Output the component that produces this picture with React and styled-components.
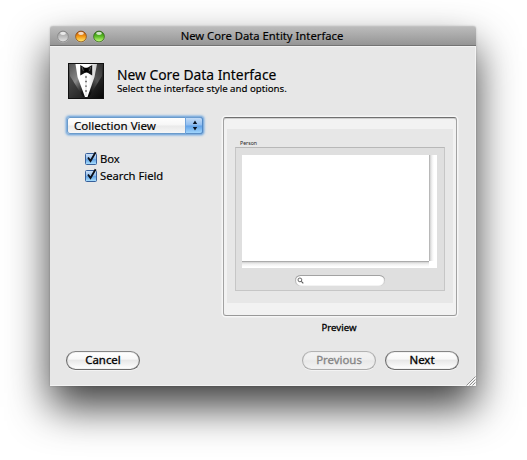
import React from "react";
import styled, { createGlobalStyle, css } from "styled-components";

const Global = createGlobalStyle`
  * { box-sizing: border-box; }
  body { margin: 0; background: #fff; overflow: hidden; }
`;

const Desktop = styled.main`
  width: 527px;
  height: 460px;
  padding: 26px 0 0 50px;
  font-family: "Noto Sans", "Open Sans", sans-serif;
  color: #000;
  -webkit-text-stroke: 0.15px currentColor;
`;

const Window = styled.section`
  position: relative;
  display: flex;
  flex-direction: column;
  width: 426px;
  height: 360px;
  border-radius: 3px 3px 0 0;
  background: #e7e7e7;
  box-shadow: 0 21px 42px rgba(0, 0, 0, 0.76), 0 0 2px rgba(0, 0, 0, 0.22);
`;

const TitleBar = styled.header`
  display: flex;
  align-items: center;
  height: 20px;
  padding: 0 7px;
  border-top: 1px solid #c2c2c2;
  border-bottom: 1px solid #737373;
  border-radius: 3px 3px 0 0;
  background: linear-gradient(#bbb, #959595);
`;

const Lights = styled.div`
  display: flex;
  gap: 6px;
  width: 60px;
`;

const Title = styled.h1`
  flex: 1;
  margin: 0;
  padding-right: 62px;
  text-align: center;
  font-size: 11.28px;
  font-weight: 400;
  line-height: 18px;
  white-space: nowrap;
`;

const Body = styled.div`
  flex: 1;
  display: flex;
  flex-direction: column;
  padding: 16px 16px 15px 16px;
  border: solid #f3f3f3;
  border-width: 1px 1px 1px 0;
`;

const Heading = styled.div`
  display: flex;
  gap: 13px;
  height: 53px;
  padding-left: 2px;
`;

const HeadingText = styled.div`
  padding-top: 3px;
  white-space: nowrap;
`;

const HeadingTitle = styled.h2`
  margin: 0;
  font-size: 13.84px;
  font-weight: 400;
  line-height: 17px;
`;

const HeadingHint = styled.p`
  margin: 0;
  font-size: 9.68px;
  line-height: 12px;
`;

const Columns = styled.div`
  display: flex;
  justify-content: space-between;
  height: 235px;
  padding: 1px 2px 0 1px;
`;

const Options = styled.div`
  width: 136px;
`;

const Popup = styled.button`
  display: flex;
  width: 136px;
  height: 17px;
  padding: 0 0 0 7px;
  border: 0;
  border-radius: 3px;
  font: inherit;
  font-size: 11.57px;
  line-height: 17px;
  color: inherit;
  text-align: left;
  background: linear-gradient(#fff 0%, #f6f6f6 48%, #e9e9e9 52%, #f8f8f8 100%);
  box-shadow: inset 0 0 0 1px #6b9bcb, 0 0 1px 1px #82afdc, 0 0 2px 1.5px #a5c5e5;
`;

const PopupText = styled.span`
  flex: 1;
`;

const PopupArrows = styled.span`
  display: flex;
  align-items: center;
  justify-content: center;
  width: 18px;
  border-left: 1px solid #6fa3dc;
  border-radius: 0 3px 3px 0;
  background: linear-gradient(#c9dff7 0%, #8fbdf0 48%, #62a2e8 52%, #a9dcff 100%);
  box-shadow: inset -1px 0 #5389c5, inset 0 1px #6d9dd0, inset 0 -1px #5c8fc6;
`;

const CheckList = styled.div`
  padding: 16px 0 0 18px;
`;

const CheckRow = styled.label`
  display: flex;
  align-items: flex-start;
  gap: 3px;
  height: 17px;
  font-size: 11.22px;
  line-height: 17px;
`;

const CheckIcon = styled.svg`
  width: 12px;
  height: 14px;
  margin-top: 1px;
`;

const PreviewColumn = styled.div`
  width: 234px;
`;

const PreviewFrame = styled.div`
  height: 199px;
  padding: 11px 3px 0;
  border: 1px solid #a2a2a2;
  border-top-color: #707070;
  border-bottom-color: #999;
  border-radius: 3px;
  background: #f2f2f2;
  box-shadow: 0 0 0 1.5px #f6f6f6, inset 0 1px #cfcfcf;
`;

const PreviewCanvas = styled.div`
  height: 174px;
  padding: 11px 8px 0;
  background: #e7e7e7;
`;

const GroupName = styled.div`
  height: 7px;
  padding-left: 5px;
  font-size: 5.2px;
  line-height: 6px;
  color: #222;
  -webkit-text-stroke: 0;
`;

const GroupBox = styled.div`
  display: flex;
  flex-direction: column;
  align-items: center;
  height: 144px;
  padding: 7px 7px 0 6px;
  border: 1px solid #c6c6c6;
  border-top-color: #b8b8b8;
  background: #dfdfdf;
`;

const Collection = styled.div`
  display: grid;
  grid-template-columns: 187px 8px;
  grid-template-rows: 106px 7px;
  width: 195px;
  background: #fff;
`;

const ScrollTrack = styled.div`
  ${(p) =>
    p.$across
      ? css`
          background: linear-gradient(#ababab 0 1px, #cfcfcf 1px, #f0f0f0 3px, #fff 6px);
        `
      : css`
          background: linear-gradient(90deg, #b8b8b8 0 1px, #d2d2d2 1px, #f1f1f1 3px, #fff 5px);
        `}
`;

const SearchField = styled.div`
  display: flex;
  align-items: center;
  width: 90px;
  height: 11px;
  margin: 7px 0 0;
  padding-left: 2px;
  border-radius: 6px;
  background: #fff;
  box-shadow: inset 0 1px #a2a2a2, inset 1px 0 1px #b5b5b5, inset -1px 0 1px #c9c9c9;
`;

const PreviewLabel = styled.div`
  padding: 6px 2px 0 0;
  text-align: center;
  font-size: 9.6px;
  line-height: 12px;
  -webkit-text-stroke: 0.3px currentColor;
`;

const Footer = styled.footer`
  display: flex;
  gap: 9px;
`;

const PushButton = styled.button`
  width: 74px;
  height: 19px;
  margin-right: ${(p) => (p.$leading ? "auto" : "0")};
  padding: 0 0 1px;
  border: 1px solid ${(p) => (p.disabled ? "#acacac" : "#6c6c6c")};
  border-top-color: ${(p) => (p.disabled ? "#b3b3b3" : "#868686")};
  border-radius: 10px;
  font: inherit;
  font-size: 11.4px;
  line-height: 16px;
  color: ${(p) => (p.disabled ? "#858585" : "#000")};
  -webkit-text-stroke: 0.3px currentColor;
  background: ${(p) =>
    p.disabled
      ? "linear-gradient(#f3f3f3 0%, #efefef 42%, #e8e8e8 52%, #f3f3f3 100%)"
      : "linear-gradient(#fff 0%, #f8f8f8 40%, #e8e8e8 50%, #fff 100%)"};
  box-shadow: inset 0 0 1px ${(p) => (p.disabled ? "#ccc" : "#777")},
    0 1px 0 rgba(255, 255, 255, 0.5);
`;

const Grip = styled.svg`
  position: absolute;
  right: 0;
  bottom: 0;
  width: 10px;
  height: 10px;
`;

const LIGHTS = [
  { id: "close", rim: "#777", dark: "#999", mid: "#bdbdbd", glow: "#e4e4e4" },
  { id: "minimize", rim: "#763c0b", dark: "#b84b00", mid: "#f49a16", glow: "#ffef79" },
  { id: "zoom", rim: "#24520d", dark: "#267c08", mid: "#5ebd27", glow: "#c7ff83" },
];

function Light({ id, rim, dark, mid, glow }) {
  return (
    <svg width="12" height="13" viewBox="0 0 12 13">
      <defs>
        <linearGradient id={id} x1="0" y1="0" x2="0" y2="1">
          <stop offset="0" stopColor={dark} />
          <stop offset="0.5" stopColor={mid} />
          <stop offset="1" stopColor={glow} />
        </linearGradient>
      </defs>
      <circle cx="6" cy="7" r="5.8" fill="#d0d0d0" opacity="0.7" />
      <circle cx="6" cy="6.5" r="5.4" fill={`url(#${id})`} stroke={rim} strokeWidth="0.9" strokeOpacity="0.8" />
      <ellipse cx="6" cy="3.3" rx="2.9" ry="1.6" fill="#fff" opacity="0.75" />
    </svg>
  );
}

function Tuxedo() {
  return (
    <svg width="36" height="36" viewBox="0 0 36 36">
      <defs>
        <linearGradient id="jacket" x1="0" y1="0" x2="1" y2="1">
          <stop offset="0" stopColor="#5c5c5c" />
          <stop offset="0.5" stopColor="#333" />
          <stop offset="1" stopColor="#050505" />
        </linearGradient>
        <linearGradient id="lapelLeft" x1="0" y1="0" x2="0.6" y2="1">
          <stop offset="0" stopColor="#555" />
          <stop offset="0.55" stopColor="#888" />
          <stop offset="1" stopColor="#151515" />
        </linearGradient>
        <linearGradient id="lapelRight" x1="1" y1="0" x2="0.3" y2="1">
          <stop offset="0" stopColor="#333" />
          <stop offset="0.5" stopColor="#555" />
          <stop offset="1" stopColor="#080808" />
        </linearGradient>
        <linearGradient id="shirt" x1="0" y1="0" x2="1" y2="0">
          <stop offset="0" stopColor="#fff" />
          <stop offset="0.6" stopColor="#fff" />
          <stop offset="1" stopColor="#c9c9c9" />
        </linearGradient>
      </defs>
      <rect width="36" height="36" fill="url(#jacket)" />
      <path d="M2 1H10L17 34H15L2 13Z" fill="url(#lapelLeft)" />
      <path d="M34 1H27L19 34H21L34 13Z" fill="url(#lapelRight)" />
      <path d="M7.5 1H29L26.5 14L19.5 34H17L9.5 14Z" fill="url(#shirt)" />
      <path d="M18 12V33" stroke="#ddd" strokeWidth="1" />
      <path d="M12.3 2L18 5.5L24.2 2V12.4L18.4 9L12.3 12.4Z" fill="#111" />
      <rect x="16.4" y="4.8" width="3.7" height="4.7" rx="0.8" fill="#000" />
      <path d="M14 4L15.4 8M22.6 4L21.5 8" stroke="#666" strokeWidth="0.8" />
      <path d="M17.3 14h1.4M17.3 18.5h1.4M17.3 23.2h1.4M17.3 28h1.4" stroke="#444" strokeWidth="1.3" />
      <rect x="0.5" y="0.5" width="35" height="35" fill="none" stroke="#101010" />
    </svg>
  );
}

function CheckBox() {
  return (
    <CheckIcon viewBox="0 0 12 14">
      <defs>
        <linearGradient id="checkFill" x1="0" y1="0" x2="0" y2="1">
          <stop offset="0" stopColor="#d5e5f7" />
          <stop offset="0.48" stopColor="#8dbbed" />
          <stop offset="0.55" stopColor="#65a4e5" />
          <stop offset="1" stopColor="#b0e4ff" />
        </linearGradient>
      </defs>
      <rect x="0.5" y="2.5" width="11" height="11" rx="1" fill="url(#checkFill)" stroke="#375f9a" />
      <path d="M3 6.5L5.5 10L10.6 1.3" fill="none" stroke="#0b0f18" strokeWidth="1.8" />
    </CheckIcon>
  );
}

const OPTIONS = ["Box", "Search Field"];

export default function App() {
  return (
    <Desktop>
      <Global />
      <Window>
        <TitleBar>
          <Lights>
            {LIGHTS.map((light) => (
              <Light key={light.id} {...light} />
            ))}
          </Lights>
          <Title>New Core Data Entity Interface</Title>
        </TitleBar>
        <Body>
          <Heading>
            <Tuxedo />
            <HeadingText>
              <HeadingTitle>New Core Data Interface</HeadingTitle>
              <HeadingHint>Select the interface style and options.</HeadingHint>
            </HeadingText>
          </Heading>
          <Columns>
            <Options>
              <Popup>
                <PopupText>Collection View</PopupText>
                <PopupArrows>
                  <svg width="6" height="11" viewBox="0 0 6 11">
                    <path d="M3 0.5L5.2 4H0.8ZM3 10.5L5.2 7H0.8Z" fill="#0a1524" />
                  </svg>
                </PopupArrows>
              </Popup>
              <CheckList>
                {OPTIONS.map((name) => (
                  <CheckRow key={name}>
                    <CheckBox />
                    {name}
                  </CheckRow>
                ))}
              </CheckList>
            </Options>
            <PreviewColumn>
              <PreviewFrame>
                <PreviewCanvas>
                  <GroupName>Person</GroupName>
                  <GroupBox>
                    <Collection>
                      <div />
                      <ScrollTrack />
                      <ScrollTrack $across />
                    </Collection>
                    <SearchField>
                      <svg width="7" height="7" viewBox="0 0 7 7">
                        <circle cx="2.9" cy="2.9" r="1.9" fill="none" stroke="#555" strokeWidth="0.9" />
                        <path d="M4.3 4.3L6.3 6.3" stroke="#555" strokeWidth="1.1" />
                      </svg>
                    </SearchField>
                  </GroupBox>
                </PreviewCanvas>
              </PreviewFrame>
              <PreviewLabel>Preview</PreviewLabel>
            </PreviewColumn>
          </Columns>
          <Footer>
            <PushButton $leading>Cancel</PushButton>
            <PushButton disabled>Previous</PushButton>
            <PushButton>Next</PushButton>
          </Footer>
        </Body>
        <Grip viewBox="0 0 10 10">
          <path d="M1.5 9.5L9.5 1.5M4.5 9.5L9.5 4.5M7.5 9.5L9.5 7.5" stroke="#fff" strokeWidth="1" />
          <path d="M0.5 9.5L9.5 0.5M3.5 9.5L9.5 3.5M6.5 9.5L9.5 6.5" stroke="#858585" strokeWidth="0.9" />
        </Grip>
      </Window>
    </Desktop>
  );
}
